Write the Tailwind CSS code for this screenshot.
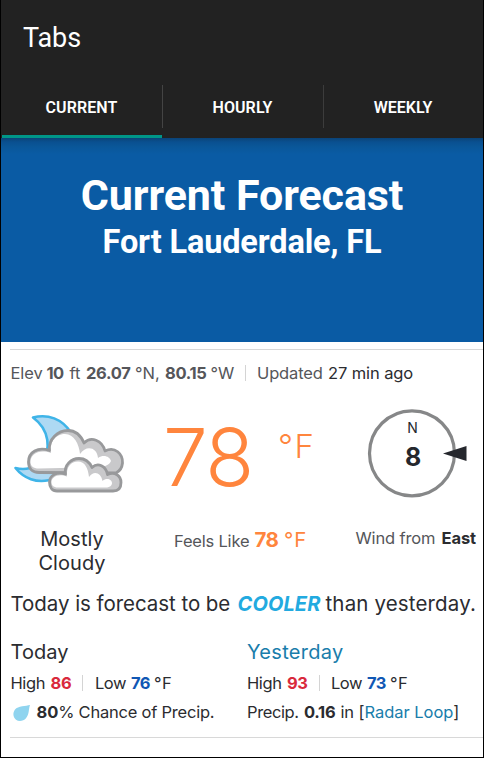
<!DOCTYPE html>
<html lang="en">
<head>
<meta charset="utf-8">
<title>Tabs</title>
<script src="https://cdn.jsdelivr.net/npm/@tailwindcss/browser@4"></script>
</head>
<body class="h-[758px] w-[484px] overflow-hidden bg-black">
<div class="mx-px flex h-[757px] w-[482px] flex-col overflow-hidden bg-white font-['Inter',sans-serif] whitespace-nowrap">

  <header class="flex h-[138px] shrink-0 flex-col bg-[#222222] font-['Roboto',sans-serif] text-white">
    <h1 class="h-[76px] pl-[22px] text-[27px] leading-[77px] tracking-[-0.1px]">Tabs</h1>
    <nav class="grid h-[62px] grid-cols-[161px_161px_160px] text-[16px] font-semibold">
      <div class="relative flex items-center justify-center border-b-[3px] border-[#009688] pt-[5px] tracking-[0.1px]">CURRENT<span class="absolute right-[-1px] top-[9px] h-[43px] w-px bg-[#444]"></span><span class="absolute bottom-[-3px] left-0 h-[3px] w-px bg-[#222]"></span></div>
      <div class="relative flex items-center justify-center pt-[2px] tracking-[0.1px]">HOURLY<span class="absolute right-[-1px] top-[9px] h-[43px] w-px bg-[#3c3c3c]"></span></div>
      <div class="flex items-center justify-center pt-[2px]">WEEKLY</div>
    </nav>
  </header>

  <section class="flex h-[204px] shrink-0 flex-col items-center bg-[#0a5ba4] bg-[linear-gradient(to_bottom,#0b4377_0,#0a5090_4px,#0a5799_9px,#0a5ba4_16px)] pt-[32px] font-['Roboto',sans-serif] font-bold text-white">
    <h2 class="h-[51px] text-[43px] leading-[50px] tracking-[-0.08px]">Current Forecast</h2>
    <h3 class="h-[42px] text-[32.5px] leading-[42px] tracking-[-0.14px]">Fort Lauderdale, FL</h3>
  </section>

  <section class="mt-[7px] ml-[9px] flex h-[389px] shrink-0 flex-col border-y border-[#d8d8d8] text-[16.5px] text-[#2b2c30]">
    <div class="mt-[13px] ml-[0.5px] flex h-5 leading-5 text-[#55565a]">
      <span class="w-[36px] tracking-[-0.1px]">Elev</span>
      <b class="w-[23px] tracking-[-0.5px]">10</b>
      <span class="w-[16.5px]">ft</span>
      <b class="w-[49px] tracking-[-0.3px]">26.07</b>
      <span class="w-[30px]">°N,</span>
      <b class="w-[45.5px] tracking-[-0.3px]">80.15</b>
      <span class="w-[34.5px]">°W</span>
      <span class="mt-0.5 mr-[11px] h-4 w-px bg-[#d4d4d4]"></span>
      <span class="w-[71px] tracking-[-0.15px]">Updated</span>
      <span class="tracking-[-0.1px] text-[#2b2c30]">27 min ago</span>
    </div>

    <div class="flex h-[195px]">
      <div class="w-[136px] pt-[22px]">
        <svg class="block h-[96px] w-[120px]" viewBox="10 405 120 96" fill="none" stroke-linejoin="round" stroke-linecap="round">
          <path d="M33 417.500C48 413.500 62 419 70.500 432L76 455C66 483 33 490 15.500 468C25 470.500 36 468 42 461C51 450 50 430 33 417.500Z" fill="#aed9f3" stroke="#3fb4e8" stroke-width="2.600"/>
          <path d="M39 472.500C32 472.500 28.500 468 28.500 462C28.500 452 38 446.500 49.500 450.500C48 439 58 430.500 68 430.500C76 430.500 81 436 84 443C91 436 102 440 105 451C115 446 123 454 122.500 463C122 468 120 471 116 473Z" fill="#c9c9cb"/>
          <path d="M39 468.500C33 468.500 30.500 466 30.500 462C30.500 454 39 449 51 453C49 441 57 434 65 434C74 434 79 444 80 454C86 445 97 447 98 458C104 454 110 457 111 461C110 464 107 465 103 467Z" fill="#fff"/>
          <path d="M39 472.500C32 472.500 28.500 468 28.500 462C28.500 452 38 446.500 49.500 450.500C48 439 58 430.500 68 430.500C76 430.500 81 436 84 443C91 436 102 440 105 451C115 446 123 454 122.500 463C122 468 120 471 116 473Z" stroke="#98999b" stroke-width="2.800"/>
          <path d="M57 491C52 491 49.500 487 49.500 482C49.500 476 56 471 65.500 474C64 465 71 458.500 79 458.500C85 458.500 89 461 92 467.500C98 462 106 466 107.500 474.500C115 471 121 476 121 482.500C121 488 118 491 113 491Z" fill="#c9c9cb"/>
          <path d="M58 487.500C53 487.500 51.500 485 51.500 482C51.500 478 57 473 67 476.500C66 467 71 461.500 78 461.500C85 461.500 88 468 89 477C94 470 101 473 102.500 481C107 477 112 480 112 483C112 486 109 487.500 106 487.500Z" fill="#fff"/>
          <path d="M57 491C52 491 49.500 487 49.500 482C49.500 476 56 471 65.500 474C64 465 71 458.500 79 458.500C85 458.500 89 461 92 467.500C98 462 106 466 107.500 474.500C115 471 121 476 121 482.500C121 488 118 491 113 491Z" stroke="#98999b" stroke-width="2.800"/>
        </svg>
        <p class="mt-[26px] w-[124px] text-center text-[20px] leading-6 tracking-[0.05px]">Mostly<br>Cloudy</p>
      </div>
      <div class="w-[208px] text-[#ff853d]">
        <div class="flex h-[143px] pl-[17px]">
          <span class="w-[115px] pt-[33px] text-[80px] leading-[82px] font-[350] tracking-[-1.5px]">78</span>
          <span class="pt-[43px] text-[33px] leading-[40px] font-[350] tracking-[1.5px]">°F</span>
        </div>
        <div class="flex h-6 pl-[28px] leading-6">
          <span class="w-[80.500px] pt-[3px] tracking-[-0.2px] text-[#55565a]">Feels Like</span>
          <b class="w-[29.500px] pt-[2px] text-[20.500px] tracking-[-0.6px]">78</b>
          <span class="pt-[2px] text-[20.500px] tracking-[0.8px]">°F</span>
        </div>
      </div>
      <div>
        <svg class="mt-[22px] ml-[8px] block h-[96px] w-[116px] text-[#25272d]" viewBox="362 405 116 96">
          <circle cx="412" cy="453.300" r="42.500" fill="none" stroke="#868788" stroke-width="3.200"/>
          <text x="412.600" y="432.500" text-anchor="middle" font-family="Inter" font-size="14" fill="currentColor">N</text>
          <text x="413.200" y="465.500" text-anchor="middle" font-family="Inter" font-size="25" font-weight="700" fill="currentColor">8</text>
          <path d="M443 453.400L466.500 446V461Z" fill="currentColor"/>
        </svg>
        <p class="mt-[25px] ml-[1.500px] flex leading-6"><span class="w-[86px] tracking-[-0.15px] text-[#55565a]">Wind from</span><b class="tracking-[-0.1px]">East</b></p>
      </div>
    </div>

    <p class="mt-[14px] ml-[0.5px] flex h-6 text-[20.5px] leading-6"><span class="w-[227px] tracking-[-0.05px]">Today is forecast to be</span><b class="w-[88px] text-[20px] tracking-[0.1px] text-[#22aae0] italic">COOLER</b><span class="tracking-[0.15px]">than yesterday.</span></p>

    <div class="mt-6 ml-[0.5px] grid grid-cols-[236.5px_1fr]">
      <div>
        <h4 class="h-6 text-[20px] leading-6 tracking-[0.05px]">Today</h4>
        <p class="mt-[7px] flex h-6 leading-6"><span class="w-[40px] tracking-[-0.4px]">High</span><b class="w-[31.500px] tracking-[-0.2px] text-[#d9293c]">86</b><span class="mt-1 mr-[12px] h-4 w-px bg-[#d4d4d4]"></span><span class="w-[36px] tracking-[-0.5px]">Low</span><b class="w-[23px] tracking-[-0.6px] text-[#1057b4]">76</b><span class="tracking-[0.6px]">°F</span></p>
        <p class="mt-[5px] flex h-6 leading-6"><svg class="mt-[5px] mr-[6px] ml-[2px] h-4 w-[18px] shrink-0" viewBox="0 0 18 16"><path d="M17 0C13 1 5 1 2 4.500C-.5 8 0 12.500 3 14.700C6 16.800 10.500 16 13 13.200C16.500 9 15.500 4 17 0Z" fill="#8fd4ef"/></svg><b class="tracking-[-0.1px]">80</b><span class="tracking-[-0.22px]">% Chance of Precip.</span></p>
      </div>
      <div>
        <h4 class="h-6 text-[20px] leading-6 tracking-[0.3px] text-[#197dab]">Yesterday</h4>
        <p class="mt-[7px] flex h-6 leading-6"><span class="w-[40px] tracking-[-0.4px]">High</span><b class="w-[31.500px] tracking-[-0.5px] text-[#d9293c]">93</b><span class="mt-1 mr-[11.500px] h-4 w-px bg-[#d4d4d4]"></span><span class="w-[36px] tracking-[-0.5px]">Low</span><b class="w-[23px] tracking-[-0.6px] text-[#1057b4]">73</b><span class="tracking-[0.6px]">°F</span></p>
        <p class="mt-[5px] flex h-6 leading-6"><span class="w-[57px] tracking-[-0.4px]">Precip.</span><b class="w-[36.500px] tracking-[-0.3px]">0.16</b><span class="w-[18px] tracking-[-0.3px]">in</span><span>[</span><span class="tracking-[-0.05px] text-[#197dab]">Radar Loop</span><span>]</span></p>
      </div>
    </div>
  </section>
</div>
</body>
</html>
